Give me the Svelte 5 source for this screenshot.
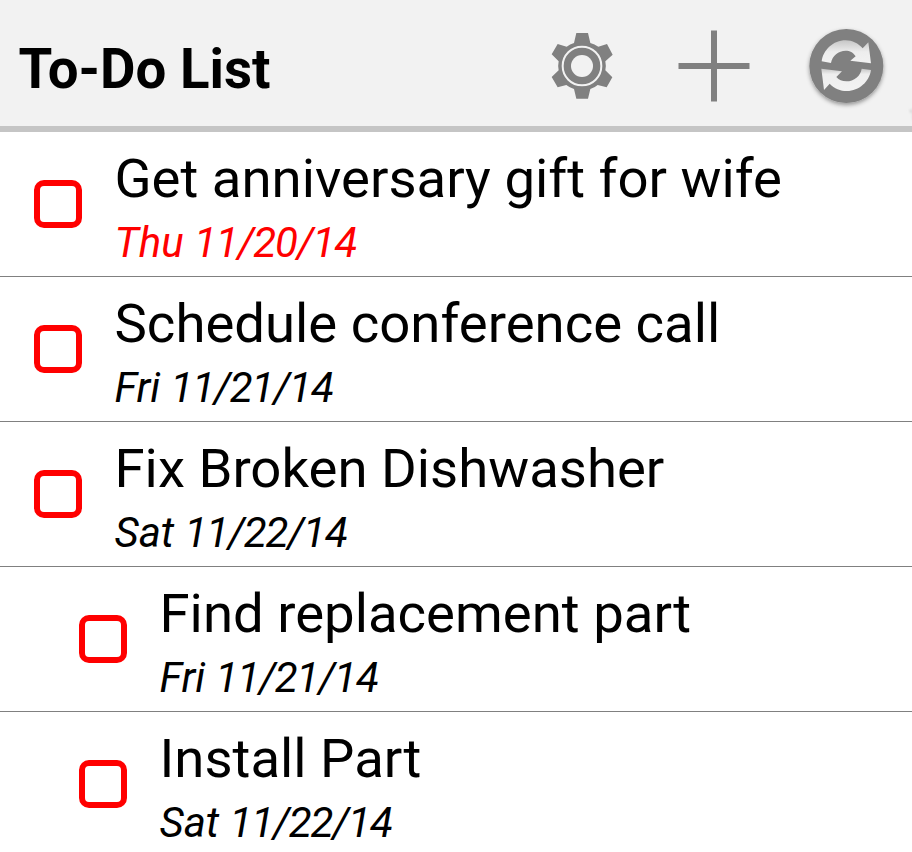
<script>
  const tasks = [
    { title: 'Get anniversary gift for wife', day: 'Thu', date: '11/20/14', late: true },
    { title: 'Schedule conference call', day: 'Fri', date: '11/21/14' },
    { title: 'Fix Broken Dishwasher', day: 'Sat', date: '11/22/14' },
    { title: 'Find replacement part', day: 'Fri', date: '11/21/14', child: true },
    { title: 'Install Part', day: 'Sat', date: '11/22/14', child: true }
  ];
</script>

<main>
  <header>
    <h1>To-Do List</h1>
    <nav>
      <button aria-label="Settings">
        <svg width="90" height="90" viewBox="0 0 270 270">
          <path fill="#808080" d="M109 39H144L151 69Q164 72 175 80L201 72L218 104L196 124Q199 138 196 151L217 172L200 202L173 195Q164 203 151 207L144 236H109L102 207Q89 203 79 195L53 202L35 171L56 151Q53 138 56 124L35 103L53 72L80 80Q90 72 102 69Z"/>
          <circle cx="126" cy="138" r="58" fill="none" stroke="#f2f2f2" stroke-width="6"/>
          <circle cx="126" cy="138" r="33" fill="#f2f2f2"/>
        </svg>
      </button>
      <button aria-label="Add task">
        <svg width="90" height="90" viewBox="0 0 90 90"><path d="M44 10.5V81.5M8.5 46H79.5" stroke="#808080" stroke-width="6"/></svg>
      </button>
      <button aria-label="Sync">
        <svg width="114" height="106" viewBox="0 0 342 318">
          <defs>
            <filter id="shade" x="-20%" y="-20%" width="140%" height="150%">
              <feDropShadow dx="0" dy="6" stdDeviation="6" flood-color="#000" flood-opacity=".4"/>
            </filter>
            <filter id="soft" x="-100%" y="-50%" width="300%" height="200%"><feGaussianBlur stdDeviation="3"/></filter>
            <linearGradient id="upper" x2="0" y2="1"><stop stop-color="#c6c6c6"/><stop offset=".5" stop-color="#ededed"/><stop offset="1" stop-color="#f2f2f2"/></linearGradient>
            <linearGradient id="lower" x2="0" y2="1"><stop stop-color="#c6c6c6"/><stop offset=".25" stop-color="#eeeeee"/><stop offset="1" stop-color="#f2f2f2"/></linearGradient>
          </defs>
          <circle cx="145" cy="138" r="111" fill="#808080" filter="url(#shade)"/>
          <path fill="url(#upper)" d="M71 124C76 90 105 61 143 61C163 61 181 70 194 85L211 67L219 130L157 122L173 109C165 97 156 92 143 92C121 92 103 107 99 129Z"/>
          <path fill="url(#lower)" d="M219 150C214 185 183 213 147 213C127 213 109 206 95 191L78 210L70 146L132 154L115 171C123 180 132 184 145 184C168 184 188 168 191 146Z"/>
          <path filter="url(#soft)" d="M344 265L332 272L342 282V300H346Z" fill="#dcdcdc"/>
        </svg>
      </button>
    </nav>
  </header>
  <ul>
    {#each tasks as task}
      <li class:child={task.child}>
        <span class="box"></span>
        <div class="copy">
          <div class="title">{task.title}</div>
          <div class="date" class:late={task.late}>{task.day} <span>{task.date}</span></div>
        </div>
      </li>
    {/each}
  </ul>
</main>

<style>
  main { width: 912px; height: 852px; overflow: hidden; background: #fff; color: #000; font-family: Roboto, sans-serif; }
  header { box-sizing: border-box; height: 132px; display: flex; justify-content: space-between; background: #f2f2f2; border-bottom: 6px solid #c5c5c5; padding: 20px 0 0 18.5px; }
  h1 { margin: 19px 0 0; font-size: 54.6px; line-height: 60px; font-weight: 700; white-space: nowrap; }
  nav { display: flex; align-items: flex-start; gap: 39px; }
  nav button:first-child { margin-right: 1px; }
  nav button:last-child { margin-left: -1px; }
  button { display: block; padding: 0; border: 0; background: none; }
  svg { display: block; }
  ul { list-style: none; margin: 0; padding: 0; }
  li { box-sizing: border-box; height: 145px; display: flex; padding-left: 34px; border-bottom: 1px solid #808080; }
  li.child { padding-left: 79px; }
  .box { box-sizing: border-box; width: 48px; height: 48px; margin-top: 48px; border: 6px solid #f00; border-radius: 10px; flex: none; }
  .copy { margin-left: 32.5px; white-space: nowrap; }
  .title { font-size: 54.5px; line-height: 68px; margin-top: 12px; }
  .date { font-size: 42px; line-height: 50px; margin-top: 6px; font-style: italic; }
  .date span { letter-spacing: -1.1px; }
  .late { color: #f00; }
</style>
